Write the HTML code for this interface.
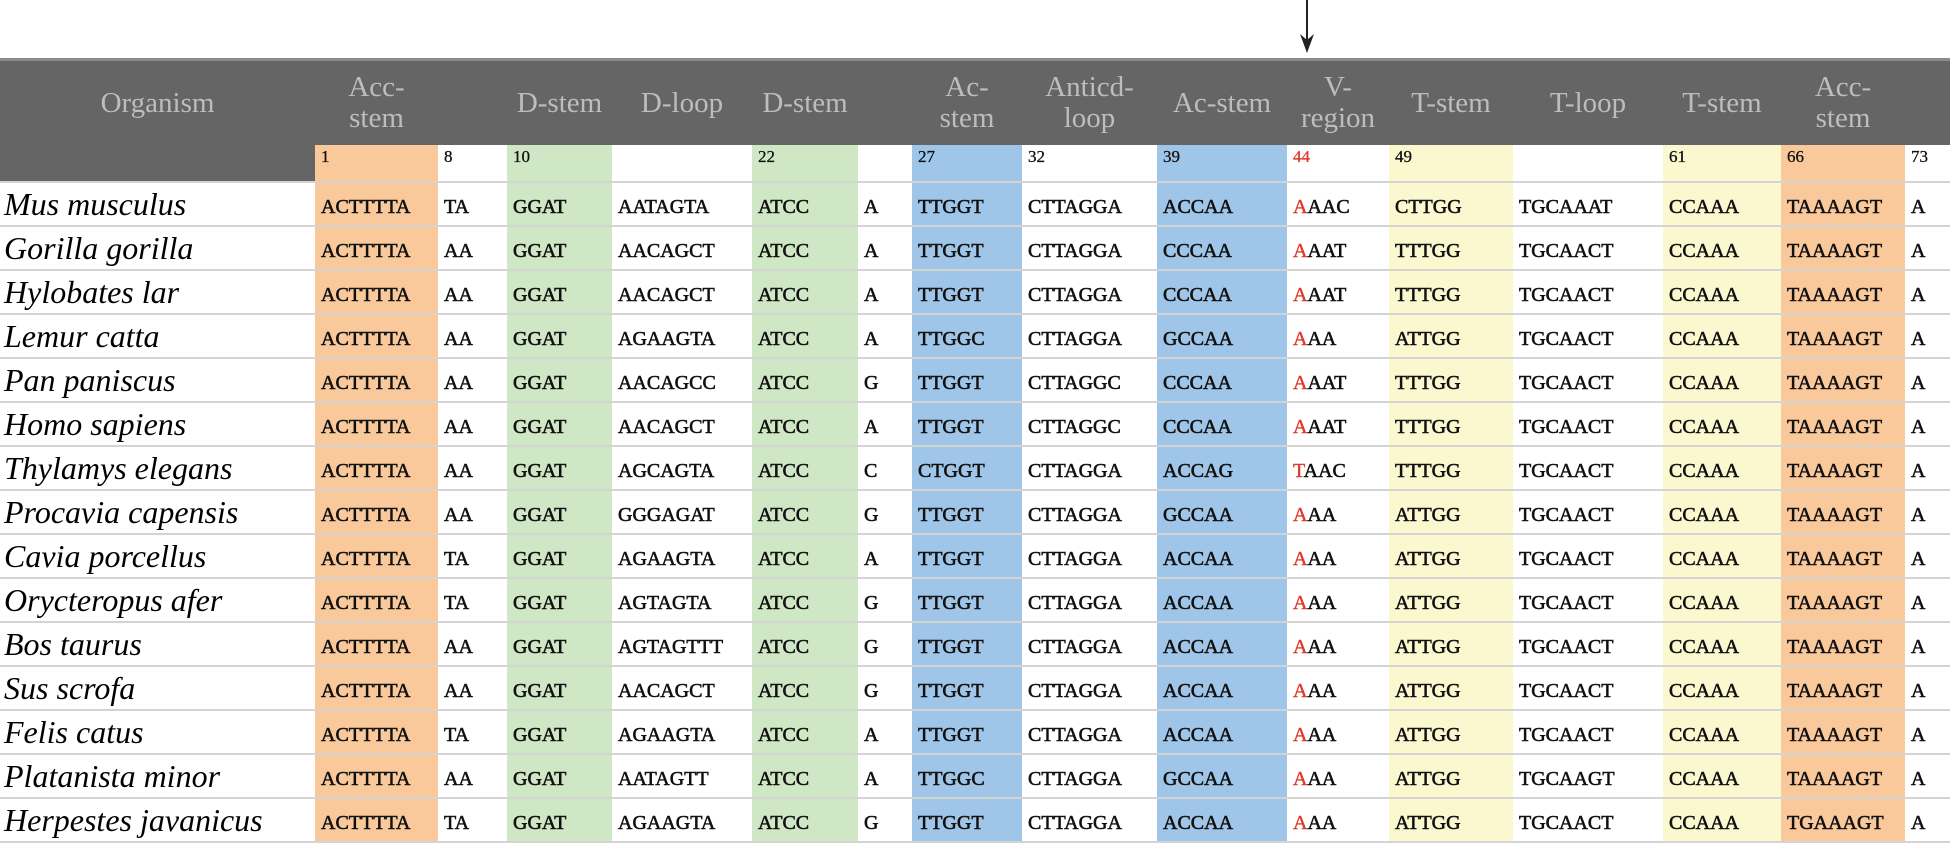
<!DOCTYPE html>
<html><head><meta charset="utf-8"><style>
body{margin:0;width:1950px;height:819px;background:#fff;overflow:hidden;font-family:"Liberation Serif",serif;position:relative}
table{position:absolute;left:0;top:58px;border-collapse:collapse;table-layout:fixed;width:1950px}
td{padding:6px 0 0 6px;white-space:nowrap;overflow:hidden;font-size:20px;color:#111;height:36px;border-bottom:2px solid #d4d4d4;-webkit-text-stroke:0.6px #111}
tr.h td{background:#656565;color:#bdbdbd;font-size:29px;text-align:center;padding:0;height:84px;line-height:31px;border-top:3px solid #8a8a8a;border-bottom:none;-webkit-text-stroke:0}
tr.n td{height:34px;font-size:17px;vertical-align:top;padding-top:2px;border-bottom:2px solid #d4d4d4;-webkit-text-stroke:0.3px #111}
td.org{font-style:italic;font-size:32px;-webkit-text-stroke:0;color:#000;padding:0 0 0 4px;line-height:36px}
.o{background:#f9c99c}.g{background:#d0e7c6}.b{background:#9fc5e8}.y{background:#fbf8d0}
.r{color:#e0392b;-webkit-text-stroke:0.4px #e0392b}
tr.n td.r{-webkit-text-stroke:0.3px #e0392b}
.gr{background:#656565!important}
</style></head><body>
<svg style="position:absolute;left:1298px;top:0" width="18" height="54"><line x1="9" y1="0" x2="9" y2="40" stroke="#222" stroke-width="2"/><path d="M2 34 L9 53 L16 34 L9 40 Z" fill="#222"/></svg>
<table>
<colgroup><col style="width:315px"><col style="width:123px"><col style="width:69px"><col style="width:105px"><col style="width:140px"><col style="width:106px"><col style="width:54px"><col style="width:110px"><col style="width:135px"><col style="width:130px"><col style="width:102px"><col style="width:124px"><col style="width:150px"><col style="width:118px"><col style="width:124px"><col style="width:45px"></colgroup>
<tr class="h"><td>Organism</td><td>Acc-<br>stem</td><td></td><td>D-stem</td><td>D-loop</td><td>D-stem</td><td></td><td>Ac-<br>stem</td><td>Anticd-<br>loop</td><td>Ac-stem</td><td>V-<br>region</td><td>T-stem</td><td>T-loop</td><td>T-stem</td><td>Acc-<br>stem</td><td></td></tr>
<tr class="n"><td class="gr"></td><td class="o">1</td><td>8</td><td class="g">10</td><td></td><td class="g">22</td><td></td><td class="b">27</td><td>32</td><td class="b">39</td><td class="r">44</td><td class="y">49</td><td></td><td class="y">61</td><td class="o">66</td><td>73</td></tr>
<tr><td class="org">Mus musculus</td><td class="o">ACTTTTA</td><td>TA</td><td class="g">GGAT</td><td>AATAGTA</td><td class="g">ATCC</td><td>A</td><td class="b">TTGGT</td><td>CTTAGGA</td><td class="b">ACCAA</td><td><span class="r">A</span>AAC</td><td class="y">CTTGG</td><td>TGCAAAT</td><td class="y">CCAAA</td><td class="o">TAAAAGT</td><td>A</td></tr>
<tr><td class="org">Gorilla gorilla</td><td class="o">ACTTTTA</td><td>AA</td><td class="g">GGAT</td><td>AACAGCT</td><td class="g">ATCC</td><td>A</td><td class="b">TTGGT</td><td>CTTAGGA</td><td class="b">CCCAA</td><td><span class="r">A</span>AAT</td><td class="y">TTTGG</td><td>TGCAACT</td><td class="y">CCAAA</td><td class="o">TAAAAGT</td><td>A</td></tr>
<tr><td class="org">Hylobates lar</td><td class="o">ACTTTTA</td><td>AA</td><td class="g">GGAT</td><td>AACAGCT</td><td class="g">ATCC</td><td>A</td><td class="b">TTGGT</td><td>CTTAGGA</td><td class="b">CCCAA</td><td><span class="r">A</span>AAT</td><td class="y">TTTGG</td><td>TGCAACT</td><td class="y">CCAAA</td><td class="o">TAAAAGT</td><td>A</td></tr>
<tr><td class="org">Lemur catta</td><td class="o">ACTTTTA</td><td>AA</td><td class="g">GGAT</td><td>AGAAGTA</td><td class="g">ATCC</td><td>A</td><td class="b">TTGGC</td><td>CTTAGGA</td><td class="b">GCCAA</td><td><span class="r">A</span>AA</td><td class="y">ATTGG</td><td>TGCAACT</td><td class="y">CCAAA</td><td class="o">TAAAAGT</td><td>A</td></tr>
<tr><td class="org">Pan paniscus</td><td class="o">ACTTTTA</td><td>AA</td><td class="g">GGAT</td><td>AACAGCC</td><td class="g">ATCC</td><td>G</td><td class="b">TTGGT</td><td>CTTAGGC</td><td class="b">CCCAA</td><td><span class="r">A</span>AAT</td><td class="y">TTTGG</td><td>TGCAACT</td><td class="y">CCAAA</td><td class="o">TAAAAGT</td><td>A</td></tr>
<tr><td class="org">Homo sapiens</td><td class="o">ACTTTTA</td><td>AA</td><td class="g">GGAT</td><td>AACAGCT</td><td class="g">ATCC</td><td>A</td><td class="b">TTGGT</td><td>CTTAGGC</td><td class="b">CCCAA</td><td><span class="r">A</span>AAT</td><td class="y">TTTGG</td><td>TGCAACT</td><td class="y">CCAAA</td><td class="o">TAAAAGT</td><td>A</td></tr>
<tr><td class="org">Thylamys elegans</td><td class="o">ACTTTTA</td><td>AA</td><td class="g">GGAT</td><td>AGCAGTA</td><td class="g">ATCC</td><td>C</td><td class="b">CTGGT</td><td>CTTAGGA</td><td class="b">ACCAG</td><td><span class="r">T</span>AAC</td><td class="y">TTTGG</td><td>TGCAACT</td><td class="y">CCAAA</td><td class="o">TAAAAGT</td><td>A</td></tr>
<tr><td class="org">Procavia capensis</td><td class="o">ACTTTTA</td><td>AA</td><td class="g">GGAT</td><td>GGGAGAT</td><td class="g">ATCC</td><td>G</td><td class="b">TTGGT</td><td>CTTAGGA</td><td class="b">GCCAA</td><td><span class="r">A</span>AA</td><td class="y">ATTGG</td><td>TGCAACT</td><td class="y">CCAAA</td><td class="o">TAAAAGT</td><td>A</td></tr>
<tr><td class="org">Cavia porcellus</td><td class="o">ACTTTTA</td><td>TA</td><td class="g">GGAT</td><td>AGAAGTA</td><td class="g">ATCC</td><td>A</td><td class="b">TTGGT</td><td>CTTAGGA</td><td class="b">ACCAA</td><td><span class="r">A</span>AA</td><td class="y">ATTGG</td><td>TGCAACT</td><td class="y">CCAAA</td><td class="o">TAAAAGT</td><td>A</td></tr>
<tr><td class="org">Orycteropus afer</td><td class="o">ACTTTTA</td><td>TA</td><td class="g">GGAT</td><td>AGTAGTA</td><td class="g">ATCC</td><td>G</td><td class="b">TTGGT</td><td>CTTAGGA</td><td class="b">ACCAA</td><td><span class="r">A</span>AA</td><td class="y">ATTGG</td><td>TGCAACT</td><td class="y">CCAAA</td><td class="o">TAAAAGT</td><td>A</td></tr>
<tr><td class="org">Bos taurus</td><td class="o">ACTTTTA</td><td>AA</td><td class="g">GGAT</td><td>AGTAGTTT</td><td class="g">ATCC</td><td>G</td><td class="b">TTGGT</td><td>CTTAGGA</td><td class="b">ACCAA</td><td><span class="r">A</span>AA</td><td class="y">ATTGG</td><td>TGCAACT</td><td class="y">CCAAA</td><td class="o">TAAAAGT</td><td>A</td></tr>
<tr><td class="org">Sus scrofa</td><td class="o">ACTTTTA</td><td>AA</td><td class="g">GGAT</td><td>AACAGCT</td><td class="g">ATCC</td><td>G</td><td class="b">TTGGT</td><td>CTTAGGA</td><td class="b">ACCAA</td><td><span class="r">A</span>AA</td><td class="y">ATTGG</td><td>TGCAACT</td><td class="y">CCAAA</td><td class="o">TAAAAGT</td><td>A</td></tr>
<tr><td class="org">Felis catus</td><td class="o">ACTTTTA</td><td>TA</td><td class="g">GGAT</td><td>AGAAGTA</td><td class="g">ATCC</td><td>A</td><td class="b">TTGGT</td><td>CTTAGGA</td><td class="b">ACCAA</td><td><span class="r">A</span>AA</td><td class="y">ATTGG</td><td>TGCAACT</td><td class="y">CCAAA</td><td class="o">TAAAAGT</td><td>A</td></tr>
<tr><td class="org">Platanista minor</td><td class="o">ACTTTTA</td><td>AA</td><td class="g">GGAT</td><td>AATAGTT</td><td class="g">ATCC</td><td>A</td><td class="b">TTGGC</td><td>CTTAGGA</td><td class="b">GCCAA</td><td><span class="r">A</span>AA</td><td class="y">ATTGG</td><td>TGCAAGT</td><td class="y">CCAAA</td><td class="o">TAAAAGT</td><td>A</td></tr>
<tr><td class="org">Herpestes javanicus</td><td class="o">ACTTTTA</td><td>TA</td><td class="g">GGAT</td><td>AGAAGTA</td><td class="g">ATCC</td><td>G</td><td class="b">TTGGT</td><td>CTTAGGA</td><td class="b">ACCAA</td><td><span class="r">A</span>AA</td><td class="y">ATTGG</td><td>TGCAACT</td><td class="y">CCAAA</td><td class="o">TGAAAGT</td><td>A</td></tr>
</table>
</body></html>
